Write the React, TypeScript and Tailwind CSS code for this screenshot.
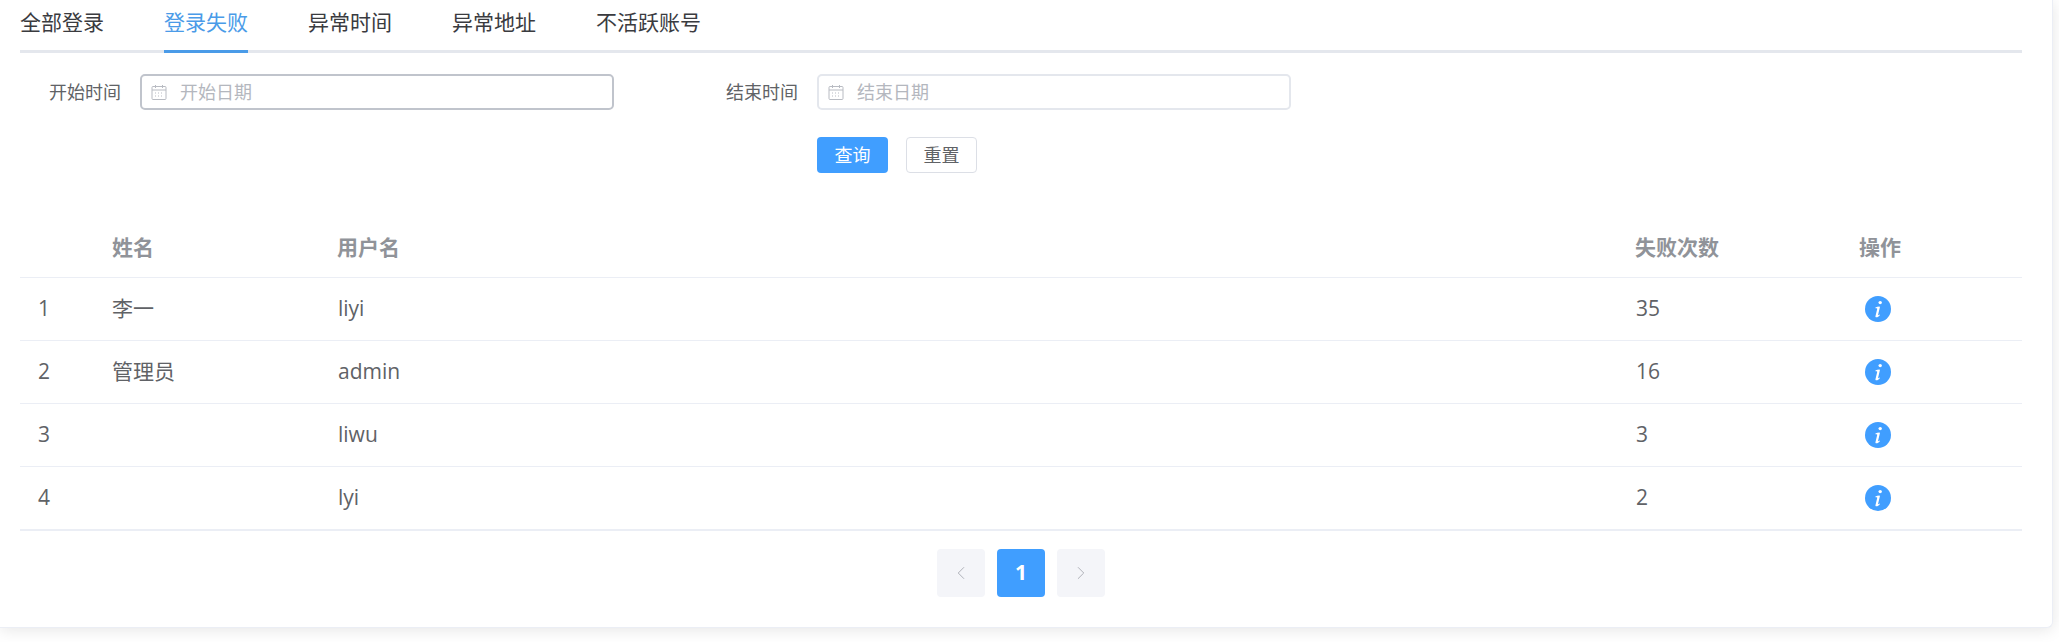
import React from "react";
import { ChevronLeft, ChevronRight } from "lucide-react";

const FONT = "font-['Open_Sans','Noto_Sans_CJK_SC',sans-serif]";

const tabs = ["全部登录", "登录失败", "异常时间", "异常地址", "不活跃账号"];

const rows = [
  { id: 1, name: "李一", username: "liyi", count: 35 },
  { id: 2, name: "管理员", username: "admin", count: 16 },
  { id: 3, name: "", username: "liwu", count: 3 },
  { id: 4, name: "", username: "lyi", count: 2 },
];

const CalendarIcon = () => (
  <svg className="h-[16px] w-[16px] shrink-0 text-[#b8bbc2]" viewBox="0 0 16 16" fill="none" stroke="currentColor">
    <rect x="1" y="2.5" width="14" height="13" rx="1" />
    <path d="M1 6h14M4.5 1v3M11.5 1v3" />
    <path d="M4 9h2M7 9h2M10 9h2M4 12h2M7 12h2M10 12h2" strokeDasharray="1 1" />
  </svg>
);

const InfoIcon = () => (
  <svg className="h-[26px] w-[26px]" viewBox="0 0 26 26">
    <circle cx="13" cy="13" r="13" fill="#409eff" />
    <circle cx="15.2" cy="6.6" r="1.7" fill="#fff" />
    <path
      d="M10.4 11.4c1.3-.6 2.7-1 3.9-1 .5 0 .7.3.6.8l-1.8 7.6c-.1.5.3.6 1.5-.4l.4.5c-1.2 1.5-2.4 2.4-3.6 2.4-.8 0-1.1-.5-.9-1.3l1.7-7c.1-.6-.2-.9-1.7-.8z"
      fill="#fff"
    />
  </svg>
);

const DateField = ({ label, placeholder, active }: { label: string; placeholder: string; active?: boolean }) => (
  <div className="flex items-center">
    <label className="w-[102px] pr-[19px] text-right text-[18px] text-[#606266]">{label}</label>
    <div
      className={`flex h-[36px] w-[474px] items-center gap-[13px] rounded-[5px] border-2 bg-white pl-[9px] ${
        active ? "border-[#c0c4cc]" : "border-[#e4e7ed]"
      }`}
    >
      <CalendarIcon />
      <span className="text-[18px] text-[#b4b7be]">{placeholder}</span>
    </div>
  </div>
);

export default function App() {
  return (
    <div className={`h-[642px] w-[2059px] overflow-hidden bg-white ${FONT}`}>
      <div className="h-[628px] w-[2053px] rounded-br-[6px] border-r border-b border-[#ebeef5] bg-white px-[20px] shadow-[0_2px_16px_rgba(0,0,0,0.1)]">
        <div className="flex h-[53px] w-[2002px] gap-[60px] border-b-[3px] border-[#e4e7ed]">
          {tabs.map((tab, i) => (
            <div
              key={tab}
              className={`-mb-[3px] h-[53px] border-b-[3px] pt-[7px] text-[21px] leading-[30px] ${
                i === 1 ? "border-[#4a9be8] text-[#4a9be8]" : "border-transparent text-[#3a3b3f]"
              }`}
            >
              {tab}
            </div>
          ))}
        </div>

        <div className="mt-[21px] flex gap-[101px] pl-[18px]">
          <DateField label="开始时间" placeholder="开始日期" active />
          <DateField label="结束时间" placeholder="结束日期" />
        </div>

        <div className="mt-[27px] flex gap-[18px] pl-[797px]">
          <button className="h-[36px] w-[71px] rounded-[4px] bg-[#409eff] text-[18px] text-white">查询</button>
          <button className="h-[36px] w-[71px] rounded-[4px] border border-[#dcdfe6] bg-white text-[18px] text-[#606266]">
            重置
          </button>
        </div>

        <table className="mt-[46px] w-[2002px] table-fixed border-collapse text-left text-[21px] text-[#606266]">
          <colgroup>
            <col className="w-[75px]" />
            <col className="w-[225px]" />
            <col className="w-[1298px]" />
            <col className="w-[224px]" />
            <col className="w-[180px]" />
          </colgroup>
          <thead>
            <tr className="h-[58px] border-b border-[#ebeef5] font-bold text-[#909399]">
              <th className="pl-[18px]"></th>
              <th className="pl-[17px]">姓名</th>
              <th className="pl-[17px]">用户名</th>
              <th className="pl-[17px]">失败次数</th>
              <th className="pl-[17px]">操作</th>
            </tr>
          </thead>
          <tbody>
            {rows.map((row, i) => (
              <tr
                key={row.id}
                className={`border-b border-[#ebeef5] ${i === rows.length - 1 ? "h-[64px] border-b-2" : "h-[63px]"}`}
              >
                <td className="pl-[18px]">{row.id}</td>
                <td className="pl-[17px]">{row.name}</td>
                <td className="pl-[18px]">{row.username}</td>
                <td className="pl-[18px]">{row.count}</td>
                <td className="pl-[23px] align-middle">
                  <InfoIcon />
                </td>
              </tr>
            ))}
          </tbody>
        </table>

        <div className="mt-[18px] flex w-[2002px] justify-center gap-[12px]">
          <button className="flex h-[48px] w-[48px] items-center justify-center rounded-[4px] bg-[#f4f5f9] text-[#a8abb2]">
            <ChevronLeft className="h-[22px] w-[22px]" strokeWidth={1} />
          </button>
          <button className="flex h-[48px] w-[48px] items-center justify-center rounded-[4px] bg-[#409eff] text-[21px] font-bold text-white">
            1
          </button>
          <button className="flex h-[48px] w-[48px] items-center justify-center rounded-[4px] bg-[#f4f5f9] text-[#a8abb2]">
            <ChevronRight className="h-[22px] w-[22px]" strokeWidth={1} />
          </button>
        </div>
      </div>
    </div>
  );
}
